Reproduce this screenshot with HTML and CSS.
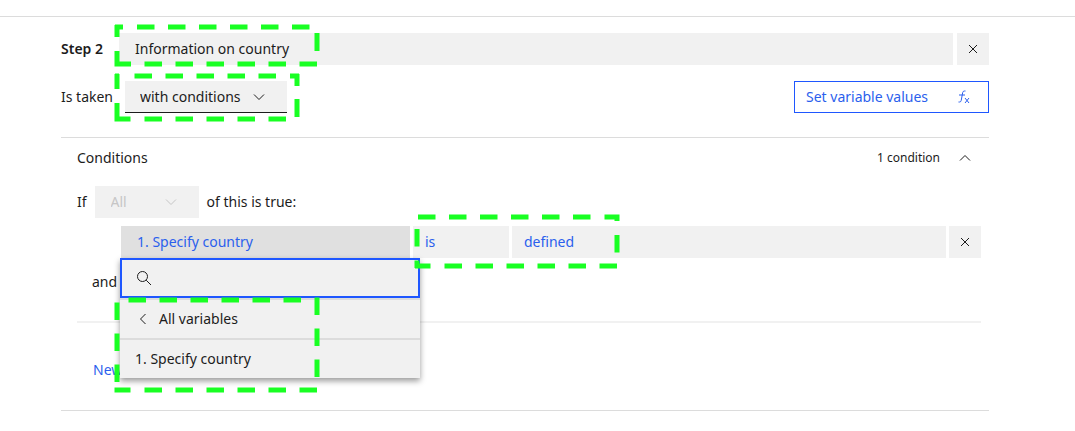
FILE: index.html
```html
<!DOCTYPE html>
<html lang="en">
<head>
<meta charset="utf-8">
<title>Step 2</title>
<link rel="stylesheet" href="styles.css">
</head>
<body>
<main class="page">
  <section class="step">
    <div class="row title-row">
      <label class="step-name" for="step-title">Step 2</label>
      <input class="field title-field" id="step-title" type="text" value="Information on country">
      <button class="field close" type="button" aria-label="Delete step">
        <svg class="icon" viewBox="0 0 16 16"><path d="M4 4l8 8M12 4l-8 8"/></svg>
      </button>
    </div>
    <div class="row taken-row">
      <label class="taken-label" for="taken">Is taken</label>
      <span class="select-wrap taken">
        <select class="field select" id="taken"><option>with conditions</option></select>
        <svg class="icon chevron" viewBox="0 0 16 16"><path d="M3 5.500l5 5 5-5"/></svg>
      </span>
      <button class="set-values" type="button">Set variable values
        <svg class="icon" viewBox="0 0 16 16"><path d="M9.500 2H8.500Q7 2 6.700 3.500L5.200 11.500Q4.900 13 3.500 13H2.500M3 6H9M9 9l4 5M13 9l-4 5"/></svg>
      </button>
    </div>

    <section class="panel">
      <button class="panel-head" type="button" aria-expanded="true">
        <span>Conditions</span>
        <span class="count">1 condition</span>
        <svg class="icon" viewBox="0 0 16 16"><path d="M3 10.500l5-5 5 5"/></svg>
      </button>
      <div class="row if-row">
        <label for="match">If</label>
        <span class="select-wrap match">
          <select class="field select" id="match" disabled><option>All</option></select>
          <svg class="icon chevron" viewBox="0 0 16 16"><path d="M3 5.500l5 5 5-5"/></svg>
        </span>
        <span>of this is true:</span>
      </div>
      <div class="rule">
        <div class="variable-wrap">
          <button class="field variable" type="button" aria-expanded="true">1. Specify country</button>
          <div class="menu">
            <label class="search">
              <svg class="icon search-icon" viewBox="0 0 16 16"><circle cx="6.500" cy="6.500" r="5"/><path d="M10.200 10.200l4.800 4.800"/></svg>
              <input class="search-input" type="text" aria-label="Search variables">
            </label>
            <button class="menu-item" type="button">
              <svg class="icon" viewBox="0 0 16 16"><path d="M10.500 3l-5 5 5 5"/></svg>All variables
            </button>
            <button class="menu-item" type="button">1. Specify country</button>
          </div>
        </div>
        <button class="field operator" type="button">is</button>
        <button class="field operand" type="button">defined</button>
        <button class="field close" type="button" aria-label="Delete condition">
          <svg class="icon" viewBox="0 0 16 16"><path d="M4 4l8 8M12 4l-8 8"/></svg>
        </button>
      </div>
      <div class="and">and</div>
      <button class="new" type="button">New</button>
    </section>
  </section>

  <svg class="marks" width="640" height="400" aria-hidden="true">
    <path d="M115 27H123M317 33V51M131 64H114.500M117 25V37M117 51V66"/>
    <path class="dash" d="M137 27H310"/><path class="dash" d="M317 64H144"/>
    <path d="M115 76H119M290 76H299M297 74V86M297 99V117M130.500 119H114.500M117 74V89M117 103V121"/>
    <path class="dash" d="M134.500 76H276.500"/><path class="dash" d="M286 119H144"/>
    <path d="M604.500 217H619.500M617 215V221M617 235V252.500M430.500 266H415M417 229V246.500M417 260.500V268"/>
    <path class="dash" d="M418 217H591"/><path class="dash" d="M617 266H444"/>
    <path d="M130.500 390H114.500"/>
    <path class="dash" d="M128.500 300H301"/><path class="dash" d="M317 297.500V377"/><path class="dash" d="M317 390H144"/><path class="dash" d="M117 302.500V382"/>
  </svg>
</main>
</body>
</html>
```
FILE: styles.css
```css
* { box-sizing: border-box; }

body {
  margin: 0;
  background: #fff;
  color: #1c1c1c;
  font: 14px/20px "Noto Sans", sans-serif;
}

button, input, select {
  margin: 0;
  padding: 0;
  border: 0;
  border-radius: 0;
  background: none;
  color: inherit;
  font: inherit;
  text-align: left;
}

.page { position: relative; padding-top: 16px; }

.step {
  padding: 16px 86px 0 61px;
  border-top: 1px solid #dcdcdc;
}

.row { display: flex; align-items: center; }

.field {
  height: 32px;
  background: #f1f1f1;
  outline: 0;
}

.icon {
  width: 16px;
  height: 16px;
  fill: none;
  stroke: currentColor;
  stroke-width: 1;
}

.step-name { flex: 0 0 58px; font-weight: 600; }
.title-field { flex: 1; min-width: 0; padding: 0 16px 2px; }

.close {
  display: grid;
  flex: 0 0 32px;
  place-items: center;
}

.title-row .close { margin-left: 4px; }

.taken-row { padding: 16px 0 24px; }
.taken-label { flex: 0 0 64px; }

.select-wrap { display: flex; align-items: center; }
.select { width: 100%; padding: 0 16px; appearance: none; }
.chevron { flex: none; margin-left: -36px; pointer-events: none; }

.taken { width: 162px; }
.taken .select { padding-left: 15px; border-bottom: 1px solid #1c1c1c; }

.set-values {
  display: flex;
  align-items: center;
  justify-content: space-between;
  width: 195px;
  height: 32px;
  margin-left: auto;
  padding: 0 16px 0 11px;
  border: 1px solid #1f57ff;
  color: #2b5fed;
}

.panel {
  padding: 0 8px 30px 16px;
  border: solid #dcdcdc;
  border-width: 1px 0;
}

.panel-head {
  display: flex;
  align-items: center;
  width: 100%;
  height: 40px;
  padding-right: 8px;
}

.count { margin: 0 17px 0 auto; font-size: 12px; }

.if-row { gap: 8px; padding: 8px 0; }
.match { width: 104px; color: #c6c6c6; }
.match .select { opacity: 1; }

.rule {
  display: flex;
  gap: 3px;
  padding-left: 44px;
}

.variable-wrap { position: relative; flex: 1 1 289px; }
.variable { width: 100%; padding: 0 16px; background: #e0e0e0; }
.variable, .operator, .operand { color: #2b5fed; }
.operator { flex: 0 0 96px; padding: 0 12px; }
.operand { flex: 1 1 434px; padding: 0 12px; }

.menu {
  position: absolute;
  z-index: 1;
  top: 100%;
  left: -1px;
  width: 300px;
  background: #f1f1f1;
  box-shadow: 0 3px 6px rgba(0, 0, 0, .4);
}

.search {
  display: flex;
  align-items: center;
  gap: 8px;
  height: 40px;
  padding: 0 14px;
  border: 2px solid #1f57ff;
}

.search-input { flex: 1; min-width: 0; outline: 0; }

.menu-item {
  display: flex;
  align-items: center;
  gap: 8px;
  width: 100%;
  height: 40px;
  padding: 0 15px;
  border-top: 2px solid #dcdcdc;
}

.and {
  padding: 14px 0 29px 15px;
  border-bottom: 2px solid #f1f1f1;
}

.new { display: block; margin: 37px 0 0 16px; color: #2b5fed; }

.marks {
  position: absolute;
  z-index: 2;
  top: 0;
  left: 0;
  fill: none;
  stroke: #19ff23;
  stroke-width: 5;
  pointer-events: none;
}

.dash { stroke-dasharray: 17.500 13.500; }
```
